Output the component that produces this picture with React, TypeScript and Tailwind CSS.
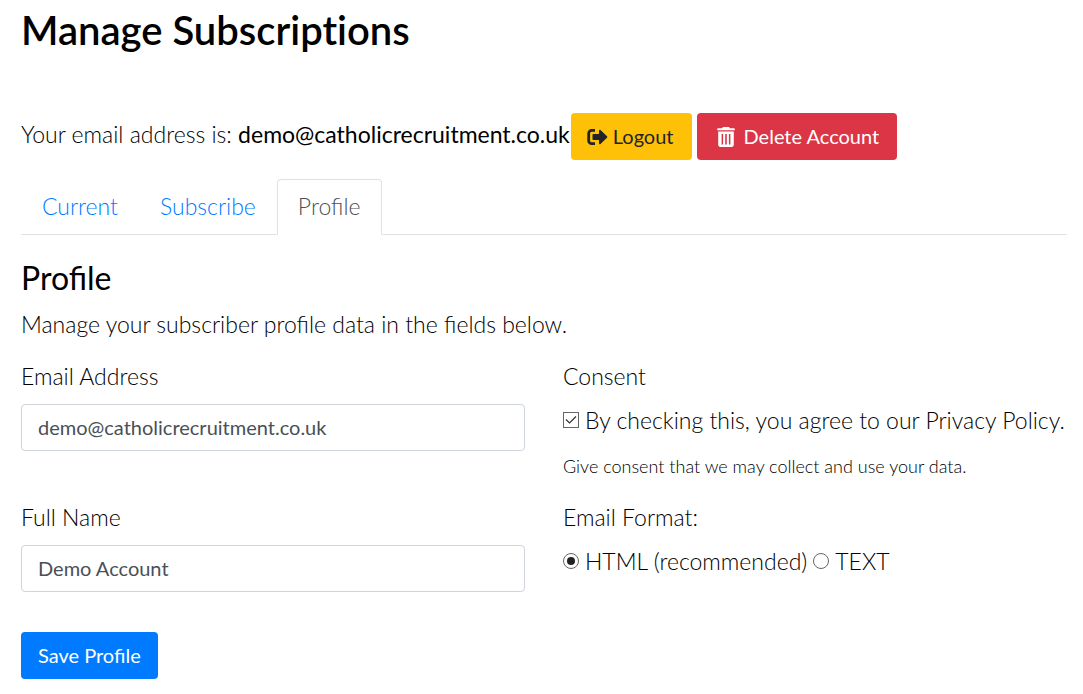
import { useState } from "react";
import type { ReactNode } from "react";

const tabs = ["Current", "Subscribe", "Profile"];

function LogoutIcon() {
  return (
    <svg width="21" height="18" viewBox="0 0 21 18" fill="none" aria-hidden="true">
      <path d="M8 2.3H4.7a3 3 0 0 0-3 3v7.4a3 3 0 0 0 3 3H8" stroke="currentColor" strokeWidth="2.8" />
      <path
        d="M6.5 6H12V2.7c0-.9.9-1.2 1.5-.6l6.5 6.2c.5.5.5.9 0 1.4l-6.5 6.2c-.6.6-1.5.3-1.5-.6V12H6.5c-.6 0-1-.4-1-1V7c0-.6.4-1 1-1z"
        fill="currentColor"
      />
    </svg>
  );
}

function TrashIcon() {
  return (
    <svg width="18" height="20" viewBox="0 0 18 20" fill="currentColor" aria-hidden="true">
      <path d="M6 0h6l.8 1.3H17c.5 0 .8.3.8.7v1.2H.2V2c0-.4.3-.7.8-.7h4.2z" />
      <path
        fillRule="evenodd"
        d="M1.2 4.4h15.6v13.4c0 1.2-.9 2.2-2.1 2.2H3.3c-1.2 0-2.1-1-2.1-2.2zM4.6 7v10.4h1.5V7zm3.6 0v10.4h1.6V7zm3.7 0v10.4h1.5V7z"
      />
    </svg>
  );
}

function TextField({ id, label, type, value }: { id: string; label: string; type: string; value: string }) {
  return (
    <div>
      <label htmlFor={id} className="block mb-3">
        {label}
      </label>
      <input
        id={id}
        type={type}
        defaultValue={value}
        className="block w-full h-[47px] px-4 pb-0.5 border border-[#ced4da] rounded bg-white text-xl font-normal text-[#495057]"
      />
    </div>
  );
}

function FormatOption({ value, checked, onSelect, children }: {
  value: string;
  checked: boolean;
  onSelect: (v: string) => void;
  children: ReactNode;
}) {
  return (
    <label className="flex items-center gap-1.5">
      <input
        type="radio"
        name="format"
        value={value}
        checked={checked}
        onChange={() => onSelect(value)}
        className="appearance-none size-4 rounded-full border border-[#666] bg-white checked:bg-[#222] checked:bg-clip-content p-[3px]"
      />
      <span>{children}</span>
    </label>
  );
}

export default function App() {
  const [tab, setTab] = useState("Profile");
  const [consent, setConsent] = useState(true);
  const [format, setFormat] = useState("html");

  return (
    <main className="bg-white pt-[7px] pb-4 pl-[21px] pr-4 font-['Lato',sans-serif] text-[23px] leading-[32px] font-light text-black">
      <h1 className="text-[40px] leading-[46px] font-semibold [font-variant-ligatures:none]">Manage Subscriptions</h1>

      <div className="mt-[60px] flex flex-wrap items-center gap-px">
        <p className="pb-1.5">
          Your email address is: <strong className="font-normal">demo@catholicrecruitment.co.uk</strong>
        </p>
        <div className="flex gap-[5px]">
          <button className="flex items-center gap-[5px] h-[47px] pl-4 pr-[18px] rounded bg-[#ffc107] text-xl font-normal text-[#212529]">
            <LogoutIcon />
            <span className="pb-0.5">Logout</span>
          </button>
          <button className="flex items-center gap-[9px] h-[47px] pl-5 pr-[18px] rounded bg-[#dc3545] text-xl font-normal text-white">
            <TrashIcon />
            <span className="pb-0.5">Delete Account</span>
          </button>
        </div>
      </div>

      <nav className="mt-[19px] flex border-b border-[#dee2e6]">
        {tabs.map((t) => (
          <a
            key={t}
            href={`#${t.toLowerCase()}`}
            onClick={() => setTab(t)}
            aria-current={tab === t ? "page" : undefined}
            className={`-mb-px px-5 py-2.5 h-14 border rounded-t ${
              tab === t ? "border-[#dee2e6] border-b-white bg-white text-[#495057]" : "border-transparent text-[#007bff]"
            }`}
          >
            {t}
          </a>
        ))}
      </nav>

      <h2 className="mt-6 text-[32px] leading-[38px] font-normal">Profile</h2>
      <p className="mt-[11px]">Manage your subscriber profile data in the fields below.</p>

      <form className="mt-5" onSubmit={(e) => e.preventDefault()}>
        <div className="grid grid-cols-2 gap-x-[38px]">
          <div className="flex flex-col gap-[50px]">
            <TextField id="email" label="Email Address" type="email" value="demo@catholicrecruitment.co.uk" />
            <TextField id="name" label="Full Name" type="text" value="Demo Account" />
          </div>

          <div>
            <fieldset>
              <legend>Consent</legend>
              <label className="mt-3 flex items-center gap-1.5 whitespace-nowrap">
                <span className="grid shrink-0">
                  <input
                    type="checkbox"
                    checked={consent}
                    onChange={(e) => setConsent(e.target.checked)}
                    className="peer appearance-none col-start-1 row-start-1 size-4 border border-[#666] bg-white"
                  />
                  <svg
                    className="col-start-1 row-start-1 size-4 pointer-events-none invisible peer-checked:visible"
                    viewBox="0 0 16 16"
                    fill="none"
                    stroke="#333"
                    strokeWidth="1.2"
                  >
                    <path d="M3 7.5 6.5 11 13 4.5" />
                  </svg>
                </span>
                <span>By checking this, you agree to our Privacy Policy.</span>
              </label>
              <p className="mt-[18px] text-lg leading-[25px]">Give consent that we may collect and use your data.</p>
            </fieldset>

            <fieldset className="mt-[22px]">
              <legend>Email Format:</legend>
              <div className="mt-3 flex gap-1.5">
                <FormatOption value="html" checked={format === "html"} onSelect={setFormat}>
                  HTML (recommended)
                </FormatOption>
                <FormatOption value="text" checked={format === "text"} onSelect={setFormat}>
                  TEXT
                </FormatOption>
              </div>
            </fieldset>
          </div>
        </div>

        <button type="submit" className="mt-10 h-[47px] px-[17px] pb-0.5 rounded bg-[#007bff] text-xl font-normal text-white">
          Save Profile
        </button>
      </form>
    </main>
  );
}
